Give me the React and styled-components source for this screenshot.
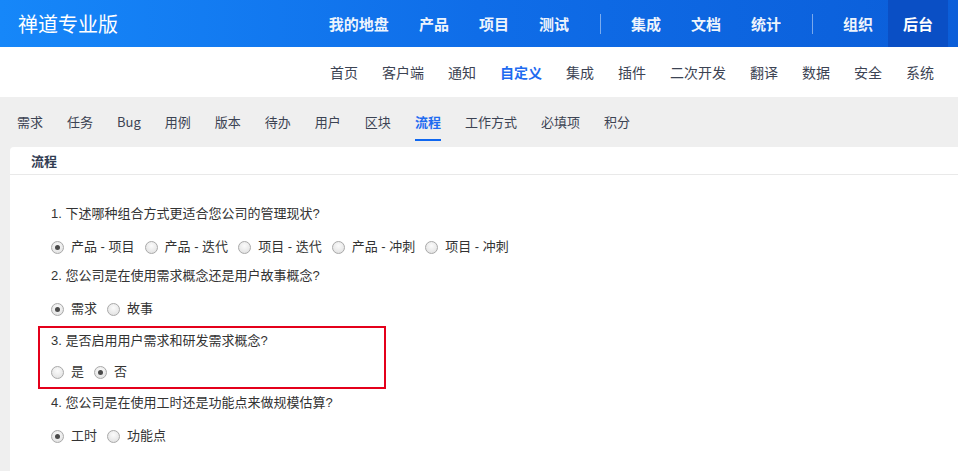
import React from "react";
import styled, { createGlobalStyle } from "styled-components";

const GlobalStyle = createGlobalStyle`
  html, body { margin: 0; padding: 0; }
  body {
    background: #efefef;
    font-family: "Liberation Sans", "Noto Sans CJK SC", sans-serif;
    color: #333;
  }
  * { box-sizing: border-box; }
`;

const Page = styled.div`
  display: flex;
  flex-direction: column;
  min-height: 471px;
`;

const TopBar = styled.header`
  height: 47px;
  display: flex;
  align-items: stretch;
  padding: 0 10px 0 18px;
  background: linear-gradient(90deg, #1687f9 0%, #0f6de8 50%, #0b5ed9 100%);
`;

const Brand = styled.div`
  flex: 1;
  display: flex;
  align-items: center;
  color: #fff;
  font-family: "Noto Sans CJK SC", sans-serif;
  font-size: 20px;
  letter-spacing: 0;
`;

const NavItem = styled.a`
  display: flex;
  align-items: center;
  padding: 0 15px;
  color: #fff;
  font-family: "Noto Sans CJK SC", sans-serif;
  font-size: 15px;
  font-weight: 700;
  background: ${(p) => (p.$active ? "#0a4fc5" : "transparent")};
  opacity: ${(p) => (p.$active ? 1 : 0.93)};
`;

const NavDivider = styled.span`
  width: 1px;
  height: 20px;
  align-self: center;
  margin: 0 15px 0 16px;
  background: rgba(255, 255, 255, 0.45);
`;

const SubNav = styled.nav`
  height: 50px;
  display: flex;
  justify-content: flex-end;
  align-items: center;
  padding-right: 12px;
  background: #fff;
`;

const SubItem = styled.a`
  padding: 0 12px;
  font-family: "Noto Sans CJK SC", sans-serif;
  font-size: 14px;
  color: ${(p) => (p.$active ? "#1e6bf0" : "#3c4353")};
  font-weight: ${(p) => (p.$active ? 700 : 400)};
`;

const Tabs = styled.nav`
  height: 50px;
  display: flex;
  align-items: center;
  padding-left: 5px;
`;

const Tab = styled.a`
  position: relative;
  padding: 0 12px;
  font-family: "Noto Sans CJK SC", sans-serif;
  font-size: 13px;
  line-height: 20px;
  color: ${(p) => (p.$active ? "#1e6bf0" : "#3c4353")};
  font-weight: ${(p) => (p.$active ? 700 : 400)};
  &::after {
    content: "";
    display: ${(p) => (p.$active ? "block" : "none")};
    position: absolute;
    left: 12px;
    right: 12px;
    bottom: -9px;
    height: 2px;
    background: #0f67f0;
  }
`;

const Card = styled.section`
  flex: 1;
  margin-left: 10px;
  background: #fff;
  border-radius: 4px 0 0 0;
`;

const CardHeader = styled.div`
  height: 28px;
  display: flex;
  align-items: center;
  padding-left: 21px;
  border-bottom: 1px solid #e9e9e9;
  font-family: "Noto Sans CJK SC", sans-serif;
  font-size: 13px;
  font-weight: 700;
  color: #313c52;
`;

const CardBody = styled.div`
  padding: 29px 0 0 41px;
  display: flex;
  flex-direction: column;
  gap: 9px;
`;

const Block = styled.div`
  display: flex;
  flex-direction: column;
  gap: ${(p) => (p.$highlight ? "11px" : "13px")};
  ${(p) =>
    p.$highlight &&
    `
    width: 348px;
    margin: -2px 0 -5px -13px;
    padding: 3px 11px 5px;
    border: 2px solid #e4001b;
  `}
`;

const Question = styled.div`
  font-size: 13px;
  line-height: 20px;
  color: #333;
`;

const RadioRow = styled.div`
  display: flex;
  align-items: center;
  height: 20px;
`;

const Option = styled.label`
  display: inline-flex;
  align-items: center;
  margin-right: 10px;
  font-size: 13px;
  line-height: 20px;
  color: #333;
`;

const RadioMark = styled.span`
  position: relative;
  width: 13px;
  height: 13px;
  margin-right: 7px;
  border-radius: 50%;
  border: 1px solid #a9a9a9;
  background: radial-gradient(circle at 50% 35%, #fbfbfb 0%, #e6e6e6 70%, #d8d8d8 100%);
  &::after {
    content: "";
    display: ${(p) => (p.$checked ? "block" : "none")};
    position: absolute;
    left: 3px;
    top: 3px;
    width: 5px;
    height: 5px;
    border-radius: 50%;
    background: #4a4a4a;
  }
`;

const questions = [
  {
    q: "1. 下述哪种组合方式更适合您公司的管理现状?",
    opts: ["产品 - 项目", "产品 - 迭代", "项目 - 迭代", "产品 - 冲刺", "项目 - 冲刺"],
    checked: 0,
  },
  {
    q: "2. 您公司是在使用需求概念还是用户故事概念?",
    opts: ["需求", "故事"],
    checked: 0,
  },
  {
    q: "3. 是否启用用户需求和研发需求概念?",
    opts: ["是", "否"],
    checked: 1,
    highlight: true,
  },
  {
    q: "4. 您公司是在使用工时还是功能点来做规模估算?",
    opts: ["工时", "功能点"],
    checked: 0,
  },
];

const mainNav = [
  ["我的地盘", "产品", "项目", "测试"],
  ["集成", "文档", "统计"],
  ["组织", "后台"],
];

const subNav = ["首页", "客户端", "通知", "自定义", "集成", "插件", "二次开发", "翻译", "数据", "安全", "系统"];
const tabs = ["需求", "任务", "Bug", "用例", "版本", "待办", "用户", "区块", "流程", "工作方式", "必填项", "积分"];

export default function App() {
  return (
    <Page>
      <GlobalStyle />
      <TopBar>
        <Brand>禅道专业版</Brand>
        {mainNav.map((group, gi) => (
          <React.Fragment key={gi}>
            {gi > 0 && <NavDivider />}
            {group.map((item) => (
              <NavItem key={item} $active={item === "后台"}>
                {item}
              </NavItem>
            ))}
          </React.Fragment>
        ))}
      </TopBar>
      <SubNav>
        {subNav.map((item) => (
          <SubItem key={item} $active={item === "自定义"}>
            {item}
          </SubItem>
        ))}
      </SubNav>
      <Tabs>
        {tabs.map((t) => (
          <Tab key={t} $active={t === "流程"}>
            {t}
          </Tab>
        ))}
      </Tabs>
      <Card>
        <CardHeader>流程</CardHeader>
        <CardBody>
          {questions.map((item) => (
            <Block key={item.q} $highlight={item.highlight}>
              <Question>{item.q}</Question>
              <RadioRow>
                {item.opts.map((o, i) => (
                  <Option key={o}>
                    <RadioMark $checked={i === item.checked} />
                    {o}
                  </Option>
                ))}
              </RadioRow>
            </Block>
          ))}
        </CardBody>
      </Card>
    </Page>
  );
}
